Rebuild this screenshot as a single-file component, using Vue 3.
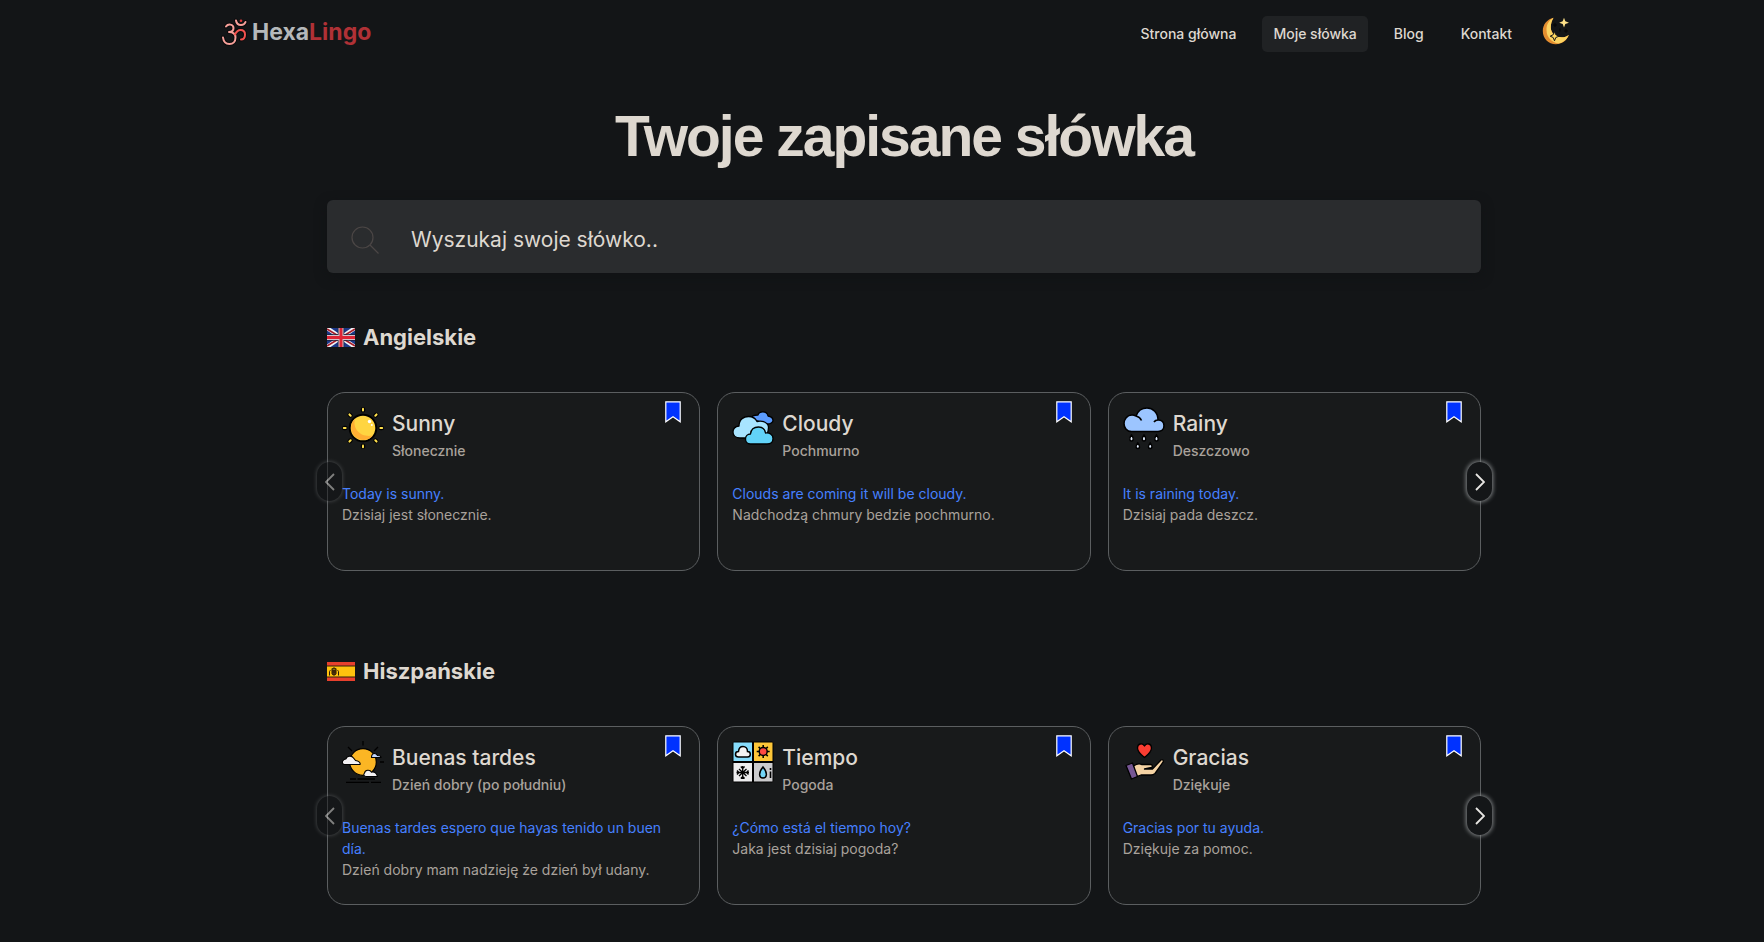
<script setup>
import { ref } from 'vue'

const query = ref('')

const links = [
  { label: 'Strona główna', active: false },
  { label: 'Moje słówka', active: true },
  { label: 'Blog', active: false },
  { label: 'Kontakt', active: false },
]

const groups = [
  {
    id: 'en',
    name: 'Angielskie',
    words: [
      { icon: 'sun', term: 'Sunny', meaning: 'Słonecznie', example: 'Today is sunny.', translation: 'Dzisiaj jest słonecznie.' },
      { icon: 'clouds', term: 'Cloudy', meaning: 'Pochmurno', example: 'Clouds are coming it will be cloudy.', translation: 'Nadchodzą chmury bedzie pochmurno.' },
      { icon: 'rain', term: 'Rainy', meaning: 'Deszczowo', example: 'It is raining today.', translation: 'Dzisiaj pada deszcz.' },
    ],
  },
  {
    id: 'es',
    name: 'Hiszpańskie',
    words: [
      { icon: 'afternoon', term: 'Buenas tardes', meaning: 'Dzień dobry (po południu)', example: 'Buenas tardes espero que hayas tenido un buen día.', translation: 'Dzień dobry mam nadzieję że dzień był udany.' },
      { icon: 'weather', term: 'Tiempo', meaning: 'Pogoda', example: '¿Cómo está el tiempo hoy?', translation: 'Jaka jest dzisiaj pogoda?' },
      { icon: 'thanks', term: 'Gracias', meaning: 'Dziękuje', example: 'Gracias por tu ayuda.', translation: 'Dziękuje za pomoc.' },
    ],
  },
]

const rays = [0, 45, 90, 135, 180, 225, 270, 315]
</script>

<template>
  <div class="page">
    <header class="header">
      <a class="logo" href="#">
        <svg class="om" viewBox="0 0 26 27" aria-hidden="true">
          <g fill="none" stroke-linecap="round" stroke-linejoin="round">
            <g stroke="#0b0b0c" stroke-width="4">
              <path d="M5 7.5C7 4.5 12.500 5 12.500 9c0 3-2.500 4-4.500 4 4.500 0 6.500 2 6.500 5.500 0 4-2.500 6.500-6 6.500-4 0-6-2.500-6.500-6.500M13 15.500c2.500-4 4-4.500 6-4.500 3.500 0 5 2 5 4.500 0 3-1.500 5-4 5M15 1.500c.5 3 2.500 4.500 5 4.500s4-1.500 4.500-3" />
            </g>
            <path stroke="#f7a09a" stroke-width="2" d="M5 7.500C7 4.500 12.500 5 12.500 9c0 3-2.500 4-4.500 4 4.500 0 6.500 2 6.500 5.500 0 4-2.500 6.500-6 6.500-4 0-6-2.500-6.500-6.500M15 1.500c.5 3 2.500 4.500 5 4.500s4-1.500 4.500-3" />
            <path stroke="#f2524f" stroke-width="2" d="M14 15.500c2-4 3.500-4.500 5.500-4.500 3.500 0 4.500 2 4.500 4.500 0 3-1.500 5-4 5" />
          </g>
          <circle cx="20" cy="1.800" r="1.300" fill="#e5383b" />
        </svg>
        <span>Hexa<span class="accent">Lingo</span></span>
      </a>
      <nav class="nav" aria-label="Menu">
        <a v-for="link in links" :key="link.label" href="#" :class="{ active: link.active }">{{ link.label }}</a>
        <button class="theme" type="button" aria-label="Motyw">
          <svg viewBox="0 0 28 28" aria-hidden="true">
            <path fill="#e58e30" d="M11.500.8C5 2.500.8 7.500.8 14c0 7.500 5.700 13.200 13 13.200 6 0 11-3.500 13-9.200-3 2-5 2.300-7 2.300-6.500 0-11-4-11-10 0-3.500 1-6.500 2.700-9.500Z" />
            <path fill="#fcd462" d="M11.500.8C6 4 4.500 8 4.500 13c0 7.500 5.500 12.500 12 13.500 4.800-1 8.500-4 10.300-8.500-3 2-5 2.300-7 2.300-6.500 0-11-4-11-10 0-3.500 1-6.500 2.700-9.500Z" />
            <path fill="#ffe28a" d="m22 .8 1.300 3.400 3.700 1.500-3.700 1.400L22 10.500l-1.300-3.400L17.200 5.700l3.500-1.500Z" />
            <path fill="#ffd75e" stroke="#17181a" stroke-width="1" d="m12.500 14.500 1.300 3.200 3.200 1.500-3.200 1.300-1.300 3.300-1.300-3.300-3-1.300 3-1.500Z" />
            <path fill="none" stroke="#060607" stroke-width="1" d="M13 6v4M11 8h4M24 12v4M22 14h4M18 11.500v3" />
          </svg>
        </button>
      </nav>
    </header>

    <main class="main">
      <h1>Twoje zapisane słówka</h1>

      <form class="search" role="search" @submit.prevent>
        <label for="word-search" aria-label="Wyszukaj słówko">
          <svg viewBox="0 0 28 28" aria-hidden="true">
            <g fill="none" stroke="#4b4645" stroke-width="1.200">
              <circle cx="11.500" cy="11.500" r="10.500" />
              <path d="m19 19 8.500 8.500" />
            </g>
          </svg>
        </label>
        <input id="word-search" v-model="query" type="text" placeholder="Wyszukaj swoje słówko.." />
      </form>

      <section v-for="group in groups" :key="group.id" class="group">
        <h2>
          <svg v-if="group.id === 'en'" class="flag" viewBox="0 0 28 19" aria-hidden="true">
            <rect width="28" height="19" fill="#1b3787" />
            <path stroke="#f4f4f6" stroke-width="4" d="m0 0 28 19M28 0 0 19" />
            <path stroke="#a81d2a" stroke-width="1.500" d="m0 1 28 17M28 1 0 18" />
            <path stroke="#1c2138" stroke-width="6.400" d="M14 0v19M0 9.500h28" />
            <path stroke="#d5c3cc" stroke-width="5" d="M14 0v19M0 9.500h28" />
            <path stroke="#df2334" stroke-width="3" d="M14 0v19M0 9.500h28" />
          </svg>
          <svg v-else class="flag" viewBox="0 0 28 19" aria-hidden="true">
            <rect width="28" height="19" fill="#e8402d" />
            <rect y="3.500" width="28" height="12" fill="#33210a" />
            <rect y="4.500" width="28" height="10" fill="#ffc20e" />
            <g fill="none" stroke="#2a1c06" stroke-width="1">
              <path d="M2.500 13.500V9.500q0-1 1-1M11.500 13.500V9.500q0-1-1-1" />
              <path fill="#7c4a10" d="M5 8h4v4q-2 2.500-4 0Z" />
              <path d="M5 8V6.500l1 .5 1-1.500L8 7l1-.5V8M5 10h4M7 8v5" />
            </g>
          </svg>
          {{ group.name }}
        </h2>

        <div class="carousel">
          <button class="arrow prev" type="button" aria-label="Poprzednie" disabled>
            <svg viewBox="0 0 10 18" aria-hidden="true"><path d="M9 1 1 9l8 8" /></svg>
          </button>

          <article v-for="word in group.words" :key="word.term" class="card">
            <button class="bookmark" type="button" :aria-label="'Usuń z zapisanych: ' + word.term">
              <svg viewBox="0 0 16 22" aria-hidden="true">
                <path fill="#0032ff" stroke="#fff" stroke-width="1.200" d="M.8.8h14.400v20L8 15.700.8 20.800Z" />
              </svg>
            </button>
            <div class="head">
              <svg v-if="word.icon === 'sun'" class="icon" viewBox="0 0 42 42" aria-hidden="true">
                <g v-for="angle in rays" :key="angle" :transform="`rotate(${angle} 21 21)`" stroke-linecap="round">
                  <path stroke="#000" stroke-width="4.500" d="M21 2.300v1" />
                  <path stroke="#ffe04d" stroke-width="2" d="M21 1.800v1.800" />
                </g>
                <circle cx="21" cy="21" r="13.300" fill="#ffd541" stroke="#000" stroke-width="2" />
                <path fill="#ffae33" d="M13 11.500A12.400 12.400 0 1 0 31 28.500C20 31 10 23 13 11.500Z" />
                <circle cx="27.500" cy="14.500" r="1.700" fill="#fff" />
                <circle cx="29.800" cy="18" r="1" fill="#fff" />
              </svg>

              <svg v-else-if="word.icon === 'clouds'" class="icon" viewBox="0 0 42 42" stroke="#000" stroke-width="1.300" stroke-linejoin="round" aria-hidden="true">
                <path fill="#5b9cff" d="M19 12c0-3 3-4 7-4 1-4 9-4.500 10 1 3 .5 5 2.500 5 4.500s-3 3.500-5 3.500Z" />
                <path fill="#a8e4ff" d="M8 31C3 31 1 28 1 25S3 19.500 7 19c0-7 5-9.500 9.500-9.500 4 0 7 2 8.500 5 6-1.500 11.500 1.500 11.500 6S34 31 30 31Z" />
                <path fill="#62d3f8" d="M18.500 37c-3 0-5-2.300-5-5s2-5 5-5c.5-5 4-7 8-7s6.500 2.500 7 6c4.500-.5 7.500 2 7.500 5.500s-2.500 5.500-6 5.500Z" />
              </svg>

              <svg v-else-if="word.icon === 'rain'" class="icon" viewBox="0 0 42 42" aria-hidden="true">
                <path fill="#9cc5ff" stroke="#000" stroke-width="1.600" stroke-linejoin="round" d="M8.500 24.500C3.500 24.500 1 20.500 1 16.500s3-8.500 8-8.500c2 0 3 .5 4 1C15 3.500 19 1 24 1c6 0 11 4.500 11 12 4 0 6 2.500 6 5.800s-2.500 5.700-6 5.700ZM13 9c3 .7 4.500 2 5.500 4.500M35 13c-2 0-3.200.7-4 2" />
                <g fill="#e4efff" stroke="#000" stroke-width="1.500">
                  <path d="M8.500 28c3 4 1.500 6 0 6s-3-2 0-6ZM21 28c3 4 1.500 6 0 6s-3-2 0-6ZM33.500 28c3 4 1.500 6 0 6s-3-2 0-6ZM14.800 36c3 4 1.500 5.500 0 5.500s-3-1.500 0-5.500ZM27.200 36c3 4 1.500 5.500 0 5.500s-3-1.500 0-5.500Z" />
                </g>
              </svg>

              <svg v-else-if="word.icon === 'afternoon'" class="icon" viewBox="0 0 42 42" aria-hidden="true">
                <path fill="none" stroke="#000" stroke-width="1.300" d="M21 0v4.500M6 6l4 4M36 6l-4 4M38 21h4M8 38h6M15.500 38H33M4 41.300h23M29 41.300h10" />
                <circle cx="21" cy="21" r="13.300" fill="#fbb624" stroke="#000" stroke-width="1.200" />
                <g fill="#f3f1f3" stroke="#000" stroke-width="1.100" stroke-linejoin="round">
                  <path d="M2.500 23.500C.5 23.500 0 21.500.7 20s2-2 3.300-2c.5-3 5.500-4 7.500-1 1 1.800 2 3 4 3 2 .5 3 2.500 2.500 3.500Z" />
                  <path d="M24 35.500c-2 0-3-2-1.500-3.300.5-3.500 5.500-4 7-1 3-.7 5 1 6 4.300Z" />
                  <path fill="#c3d6ff" d="M29.500 16.500c0-2.500 1-4 3-4s2.500 1 3 2c2 0 3.500.5 3.500 2Z" />
                </g>
              </svg>

              <svg v-else-if="word.icon === 'weather'" class="icon" viewBox="0 0 42 42" aria-hidden="true">
                <rect x=".5" y=".5" width="41" height="41" rx="2" fill="#000" />
                <path fill="#86dcfc" d="M1.500 1.500H20V20H1.500Z" />
                <path fill="#fdc638" d="M22 1.500h18.500V20H22Z" />
                <path fill="#ededee" d="M1.500 22H20v18.500H1.500Z" />
                <path fill="#cbcbcd" d="M22 22h18.500v18.500H22Z" />
                <path fill="#f4f4f4" stroke="#000" stroke-width="1.500" d="M6.500 16c-2 0-3-1.300-3-2.800S4.500 10.500 6.500 10.500c.3-4 2.500-5 4.500-5 2.500 0 4.500 2 4.500 5 2 0 2.800 1.200 2.800 2.700S17 16 15.500 16Z" />
                <g stroke="#000" stroke-width="1.500">
                  <path d="M31.200 4v13M24.700 10.500h13M26.600 5.900l9.200 9.200M35.800 5.900l-9.200 9.200" />
                  <circle cx="31.200" cy="10.500" r="4" fill="#ff4a43" />
                </g>
                <path fill="none" stroke="#000" stroke-width="1.300" d="M10.700 25v13M4.500 31.500h12.500M7 28l7.500 7M14.500 28 7 35M8.800 25.500l1.900 2 1.900-2M8.800 37.500l1.900-2 1.900 2M5 29.500l2 2-2 2M16.500 29.500l-2 2 2 2" />
                <path fill="#72d5f7" stroke="#000" stroke-width="1.500" d="M31 26c5 6 4 11 0 11s-5-5 0-11Z" />
                <path stroke="#000" stroke-width="1.600" d="M38.500 27v2M38.500 30.500V37" />
              </svg>

              <svg v-else class="icon" viewBox="0 0 42 42" stroke="#000" stroke-width="1.300" stroke-linejoin="round" aria-hidden="true">
                <path fill="#fb3d32" d="M21.500 16.500C17 13 14.500 10 14.500 7c0-4.500 5-5.500 7-2 2-3.500 7-2.500 7 2 0 3-2.500 6-7 9.500Z" />
                <path fill="#f5d3a4" d="M10.500 25c3-2 6-2.500 8-1.500h9c2 0 2.500 2 1 3l-7 1.500h8l8.500-9c1.500-1 3 .5 2 2.200L32 32.500c-1 1-2.500 1.500-4 1.500H18l-5.500 2Z" />
                <path fill="#755693" d="M3 24.500 9.500 22l5 13.500L8.500 38Z" />
              </svg>

              <div class="names">
                <h3>{{ word.term }}</h3>
                <p>{{ word.meaning }}</p>
              </div>
            </div>
            <div class="example">
              <p class="foreign">{{ word.example }}</p>
              <p>{{ word.translation }}</p>
            </div>
          </article>

          <button class="arrow next" type="button" aria-label="Następne">
            <svg viewBox="0 0 10 18" aria-hidden="true"><path d="m1 1 8 8-8 8" /></svg>
          </button>
        </div>
      </section>
    </main>
  </div>
</template>

<style>
body {
  background: #131517;
}
</style>

<style scoped>
.page {
  font-family: Inter, "Liberation Sans", sans-serif;
  color: #ded8d0;
  padding-bottom: 36px;
}

h1, h2, h3, p {
  margin: 0;
}

button {
  padding: 0;
  border: 0;
  background: none;
  color: inherit;
}

svg {
  display: block;
}

.header {
  display: flex;
  align-items: flex-start;
  justify-content: space-between;
  max-width: 1350px;
  margin: 0 auto;
  padding: 16px 0 0 28px;
}

.logo {
  display: flex;
  align-items: center;
  gap: 5px;
  color: #b5b8ba;
  font-size: 23px;
  font-weight: 700;
  line-height: 32px;
  text-decoration: none;
}

.om {
  width: 26px;
  height: 27px;
  overflow: visible;
}

.accent {
  color: #b03136;
}

.nav {
  display: flex;
  align-items: center;
  gap: 15px;
}

.nav a {
  padding: 8px 11px;
  border-radius: 5px;
  color: #ded8d0;
  font-size: 14px;
  font-weight: 500;
  line-height: 20px;
  text-decoration: none;
}

.nav a.active {
  background: #202224;
}

.theme {
  width: 28px;
  margin: 0 1px 6px 4px;
}

.main {
  max-width: 1154px;
  margin: 0 auto;
  padding: 48px 0 0 44px;
}

h1 {
  font-family: "Liberation Sans", Arial, sans-serif;
  font-size: 57px;
  font-weight: 700;
  line-height: 72px;
  letter-spacing: -2px;
  text-align: center;
}

.search {
  display: flex;
  align-items: center;
  margin-top: 28px;
  padding: 6px 24px 0;
  border-radius: 6px;
  background: #2a2c2e;
  box-shadow: 0 4px 12px #111315;
}

.search svg {
  width: 28px;
  height: 28px;
}

.search input {
  flex: 1;
  min-width: 0;
  padding: 18px 0 17px 32px;
  border: 0;
  outline: 0;
  background: none;
  color: inherit;
  font-family: inherit;
  font-size: 21px;
  line-height: 32px;
}

.search input::placeholder {
  color: #ded8d0;
  opacity: 1;
}

.group {
  margin-top: 48px;
}

.group + .group {
  margin-top: 84px;
}

h2 {
  display: flex;
  align-items: center;
  gap: 8px;
  font-size: 22px;
  font-weight: 700;
  line-height: 32px;
}

.flag {
  width: 28px;
  height: 19px;
}

.carousel {
  position: relative;
  display: grid;
  grid-template-columns: repeat(3, minmax(0, 1fr));
  gap: 17px;
  margin-top: 39px;
}

.card {
  position: relative;
  min-height: 149px;
  padding: 14px;
  border: 1px solid #5b5e60;
  border-radius: 18px;
  background: #181a1b;
}

.bookmark {
  position: absolute;
  top: 8px;
  right: 18px;
  width: 16px;
}

.head {
  display: flex;
  gap: 8px;
}

.icon {
  flex: none;
  width: 42px;
  height: 42px;
  overflow: visible;
}

.names {
  padding-top: 3px;
}

h3 {
  font-size: 21px;
  font-weight: 500;
  line-height: 28px;
}

.names p {
  margin-top: 3px;
  color: #a9a29b;
  font-size: 14px;
  font-weight: 500;
  line-height: 20px;
}

.example {
  margin-top: 22px;
  color: #a9a29b;
  font-size: 14px;
  line-height: 21px;
}

.foreign {
  color: #4680ff;
}

.arrow {
  position: absolute;
  z-index: 1;
  top: 70px;
  display: grid;
  place-items: center;
  width: 25px;
  height: 39px;
  border-radius: 13px;
  background: #141618;
  box-shadow: 0 0 4px 1px #85888a;
}

.arrow svg {
  width: 10px;
  height: 18px;
  fill: none;
  stroke: #e8e6e3;
  stroke-width: 1.8;
}

.prev {
  left: -10px;
  opacity: 0.5;
  box-shadow: 0 0 4px #85888a;
}

.next {
  right: -11px;
}
</style>
